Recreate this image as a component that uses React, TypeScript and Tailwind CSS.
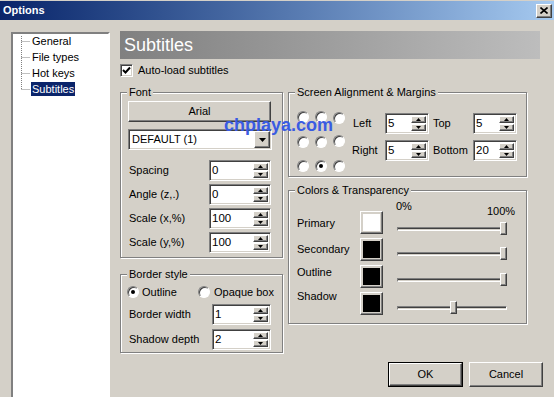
import React from "react";

const sunken =
  "border border-t-[#808080] border-l-[#808080] border-b-white border-r-white shadow-[inset_1px_1px_0_#404040,inset_-1px_-1px_0_#d4d0c8]";
const raised =
  "border border-t-white border-l-white border-b-[#404040] border-r-[#404040] shadow-[inset_-1px_-1px_0_#808080]";

function Arrow({ up = false, size = "small" }: { up?: boolean; size?: "small" | "big" }) {
  if (size === "big") {
    return (
      <svg width="7" height="4" viewBox="0 0 7 4">
        <polygon points="0,0 7,0 3.5,4" fill="#000" />
      </svg>
    );
  }
  return (
    <svg width="5" height="3" viewBox="0 0 5 3">
      <polygon points={up ? "2.5,0 5,3 0,3" : "0,0 5,0 2.5,3"} fill="#000" />
    </svg>
  );
}

function Spin({ value, w }: { value: string; w: string }) {
  return (
    <div className={`${w} h-[21px] bg-white flex shrink-0 ${sunken}`}>
      <span className="flex-1 pl-[2px] pt-[2px] leading-[14px] text-[11.5px]">{value}</span>
      <div className="flex flex-col gap-[1px] my-[2px] mr-[2px]">
        <div className={`w-[15px] h-[8px] bg-[#d4d0c8] flex items-center justify-center ${raised}`}>
          <Arrow up />
        </div>
        <div className={`w-[15px] h-[8px] bg-[#d4d0c8] flex items-center justify-center ${raised}`}>
          <Arrow />
        </div>
      </div>
    </div>
  );
}

function Radio({ checked = false }: { checked?: boolean }) {
  return (
    <span className="w-[12px] h-[12px] rounded-full bg-white border border-t-[#808080] border-l-[#808080] border-b-white border-r-white shadow-[inset_1px_1px_0_#404040] flex items-center justify-center shrink-0">
      {checked && <span className="w-[4px] h-[4px] rounded-full bg-black" />}
    </span>
  );
}

function Group({ title, className, children }: { title: string; className: string; children: React.ReactNode }) {
  return (
    <div className={`relative border border-[#808080] shadow-[inset_1px_1px_0_#fff,1px_1px_0_#fff] ${className}`}>
      <span className="absolute -top-[7px] left-[6px] px-[2px] bg-[#d4d0c8] leading-[13px]">{title}</span>
      {children}
    </div>
  );
}

function Slider({ pos }: { pos: number }) {
  return (
    <div className="relative w-[110px] h-[13px]">
      <div className="absolute left-0 right-0 top-[5px] h-[4px] bg-[#d4d0c8] border border-t-[#808080] border-l-[#808080] border-b-white border-r-white shadow-[inset_0_1px_0_#404040]" />
      <div className={`absolute top-0 w-[7px] h-[13px] bg-[#d4d0c8] ${raised}`} style={{ left: pos }} />
    </div>
  );
}

const fontRows = [
  { label: "Spacing", value: "0", mt: "mt-[10px]" },
  { label: "Angle (z,.)", value: "0", mt: "mt-[3px]" },
  { label: "Scale (x,%)", value: "100", mt: "mt-[3px]" },
  { label: "Scale (y,%)", value: "100", mt: "mt-[3px]" },
];

const colorRows = [
  { label: "Primary", color: "bg-white", labelMt: "mt-[6px]", sliderMt: "mt-[11px]", pos: 103 },
  { label: "Secondary", color: "bg-black", labelMt: "mt-[5px]", sliderMt: "mt-[9px]", pos: 103 },
  { label: "Outline", color: "bg-black", labelMt: "mt-[1px]", sliderMt: "mt-[8px]", pos: 103 },
  { label: "Shadow", color: "bg-black", labelMt: "-mt-[2px]", sliderMt: "mt-[9px]", pos: 53 },
];

const treeItems = ["General", "File types", "Hot keys", "Subtitles"];

export default function App() {
  return (
    <div className="relative w-[554px] h-[397px] overflow-hidden bg-[#d4d0c8] text-[11px] leading-[13px] text-black font-['Liberation_Sans',Arial,sans-serif]">
      {/* title bar */}
      <div className="h-[20px] border-t border-[#d4d0c8] flex items-center bg-gradient-to-r from-[#0a246a] to-[#a6caf0]">
        <span className="pl-[3px] font-bold text-white text-[11px]">Options</span>
        <div className={`ml-auto mr-[2px] w-[16px] h-[14px] bg-[#d4d0c8] flex items-center justify-center ${raised}`}>
          <svg width="8" height="7" viewBox="0 0 8 7">
            <path d="M0.5 0.5 L7.5 6.5 M7.5 0.5 L0.5 6.5" stroke="#000" strokeWidth="1.6" />
          </svg>
        </div>
      </div>

      <div className="flex">
        {/* tree */}
        <div className="relative mt-[12px] ml-[11px] w-[99px] h-[380px] bg-white border-2 border-t-[#808080] border-l-[#808080] border-b-white border-r-white shrink-0">
          <svg className="absolute left-0 top-0" width="20" height="60">
            <path
              d="M8.5 2 V55.5 M8.5 7.5 H17 M8.5 23.5 H17 M8.5 39.5 H17 M8.5 55.5 H17"
              stroke="#808080"
              strokeWidth="1"
              strokeDasharray="1 1"
              fill="none"
            />
          </svg>
          <div className="-mt-[1px] pl-[18px]">
            {treeItems.map((t) => (
              <div key={t} className="h-[16px] flex items-center">
                <span
                  className={
                    t === "Subtitles"
                      ? "px-[1px] leading-[14px] bg-[#0a246a] text-white"
                      : "px-[1px] leading-[14px]"
                  }
                >
                  {t}
                </span>
              </div>
            ))}
          </div>
        </div>

        {/* right column */}
        <div className="ml-[10px] mt-[11px] w-[423px] flex flex-col">
          <div className="w-[420px] h-[28px] bg-gradient-to-r from-[#808080] to-[#bdbdbd] flex items-center pl-[4px]">
            <span className="text-white text-[18px] leading-[22px]">Subtitles</span>
          </div>

          <div className="mt-[5px] flex items-center h-[13px]">
            <span className={`w-[13px] h-[13px] bg-white flex items-center justify-center ${sunken}`}>
              <svg width="9" height="9" viewBox="0 0 9 9">
                <path d="M1 4 L3.5 6.5 L8 1.5" stroke="#000" strokeWidth="2" fill="none" />
              </svg>
            </span>
            <span className="ml-[5px]">Auto-load subtitles</span>
          </div>

          <div className="mt-[15px] flex items-start">
            {/* left column */}
            <div className="w-[163px] flex flex-col">
              <Group title="Font" className="h-[166px] pt-[8px] pl-[7px]">
                <div className={`w-[143px] h-[21px] bg-[#d4d0c8] flex items-center justify-center ${raised}`}>Arial</div>
                <div className={`mt-[7px] w-[144px] h-[21px] bg-white flex items-center ${sunken}`}>
                  <span className="flex-1 pl-[3px]">DEFAULT (1)</span>
                  <div className={`w-[16px] h-[17px] mr-[1px] bg-[#d4d0c8] flex items-center justify-center ${raised}`}>
                    <Arrow size="big" />
                  </div>
                </div>
                {fontRows.map((r) => (
                  <div key={r.label} className={`${r.mt} flex items-center h-[21px]`}>
                    <span className="w-[81px] pl-[1px]">{r.label}</span>
                    <Spin value={r.value} w="w-[62px]" />
                  </div>
                ))}
              </Group>

              <Group title="Border style" className="mt-[16px] h-[79px] pt-[10px] pl-[6px]">
                <div className="flex items-center h-[14px]">
                  <Radio checked />
                  <span className="ml-[3px] w-[56px]">Outline</span>
                  <Radio />
                  <span className="ml-[4px]">Opaque box</span>
                </div>
                <div className="mt-[5px] flex items-center h-[21px]">
                  <span className="w-[85px] pl-[2px]">Border width</span>
                  <Spin value="1" w="w-[59px]" />
                </div>
                <div className="mt-[4px] flex items-center h-[21px]">
                  <span className="w-[85px] pl-[2px]">Shadow depth</span>
                  <Spin value="2" w="w-[59px]" />
                </div>
              </Group>
            </div>

            {/* right column groups */}
            <div className="ml-[5px] w-[239px] flex flex-col">
              <Group title="Screen Alignment & Margins" className="h-[85px] flex">
                <div className="pl-[8px] pt-[18px] grid grid-cols-[12px_12px_12px] gap-x-[6px] gap-y-[9px] w-[57px]">
                  <Radio />
                  <Radio />
                  <span className="translate-y-[1px]"><Radio /></span>
                  <Radio />
                  <Radio />
                  <span className="-translate-y-[1px]"><Radio /></span>
                  <Radio />
                  <Radio checked />
                  <Radio />
                </div>
                <div className="pt-[20px] flex flex-col gap-[6px]">
                  <div className="flex items-center h-[21px]">
                    <span className="ml-[7px] w-[32px]">Left</span>
                    <Spin value="5" w="w-[44px]" />
                    <span className="ml-[4px] w-[40px]">Top</span>
                    <Spin value="5" w="w-[44px]" />
                  </div>
                  <div className="flex items-center h-[21px]">
                    <span className="ml-[6px] w-[33px]">Right</span>
                    <Spin value="5" w="w-[44px]" />
                    <span className="ml-[4px] w-[40px]">Bottom</span>
                    <Spin value="20" w="w-[44px]" />
                  </div>
                </div>
              </Group>

              <Group title="Colors & Transparency" className="mt-[13px] h-[134px]">
                <div className="h-[20px] flex items-start">
                  <span className="ml-[107px] mt-[9px]">0%</span>
                  <span className="ml-[75px] mt-[14px]">100%</span>
                </div>
                {colorRows.map((r) => (
                  <div key={r.label} className="h-[27px] flex items-start pl-[8px]">
                    <span className={`w-[63px] ${r.labelMt}`}>{r.label}</span>
                    <div className={`w-[23px] h-[23px] p-[2px] bg-[#d4d0c8] ${raised}`}>
                      <div className={`w-full h-full ${r.color}`} />
                    </div>
                    <div className={`ml-[14px] ${r.sliderMt}`}>
                      <Slider pos={r.pos} />
                    </div>
                  </div>
                ))}
              </Group>
            </div>
          </div>

          <div className="mt-[9px] flex justify-end">
            <div className="w-[75px] h-[25px] border border-black">
              <div className={`w-full h-full bg-[#d4d0c8] flex items-center justify-center ${raised}`}>OK</div>
            </div>
            <div className={`ml-[6px] w-[74px] h-[25px] bg-[#d4d0c8] flex items-center justify-center ${raised}`}>
              Cancel
            </div>
          </div>
        </div>
      </div>

      {/* watermark */}
      <span className="absolute left-[224px] top-[114px] text-[18px] leading-[22px] font-bold text-[#3a5ce2]">chplaya.com</span>
    </div>
  );
}
